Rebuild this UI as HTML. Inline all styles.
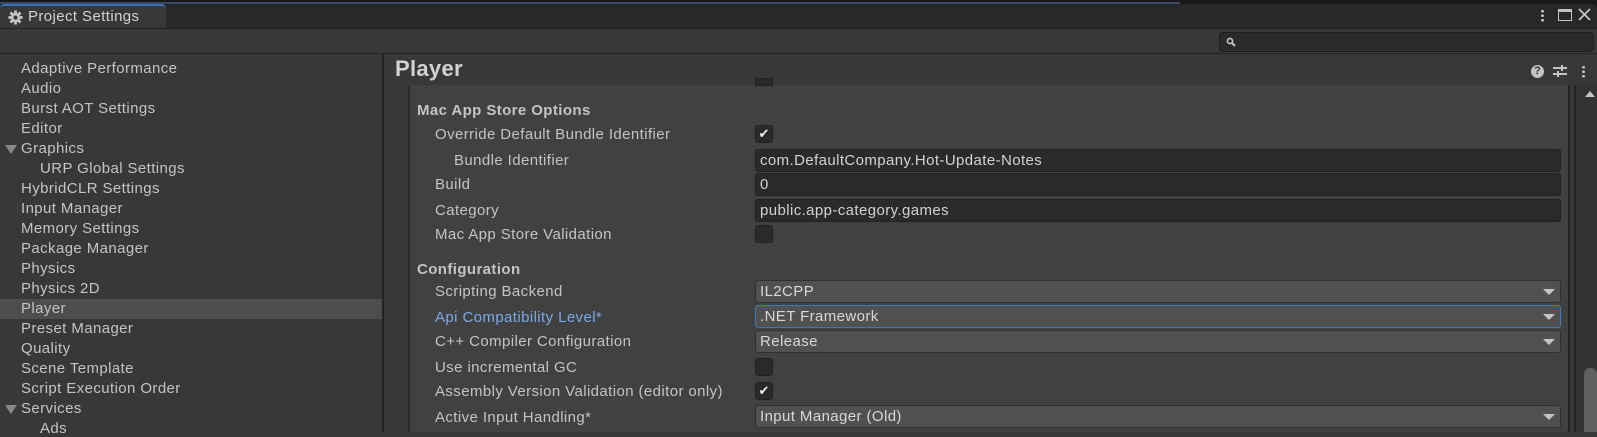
<!DOCTYPE html>
<html><head><meta charset="utf-8"><style>
*{box-sizing:border-box;margin:0;padding:0}
body{width:1597px;height:432px;overflow:hidden;background:#383838;font-family:"Liberation Sans",sans-serif;font-size:15px;letter-spacing:0.4px;color:#c4c4c4;position:relative}
.abs{position:absolute}
.li{position:absolute;left:21px;white-space:nowrap}
.lb{position:absolute;left:435px;white-space:nowrap}
.fld{position:absolute;left:755px;width:806px;height:23px;border-radius:3px;padding:2px 4px;white-space:nowrap}
.tf{background:#2a2a2a;border:1px solid #212121;color:#d2d2d2}
.dd{background:#515151;border:1px solid #303030;color:#d8d8d8}
.dd:after{content:"";position:absolute;right:5px;top:8px;border-left:6px solid transparent;border-right:6px solid transparent;border-top:6px solid #c4c4c4}
.cb{position:absolute;left:755px;width:18px;height:18px;background:#2a2a2a;border:1px solid #212121;border-radius:3px;color:#eee;font-size:13px;line-height:16px;text-align:center;letter-spacing:0}
.tri{position:absolute;left:5px;border-left:6px solid transparent;border-right:6px solid transparent;border-top:9px solid #888}
</style></head><body>
<div class="abs" style="left:0;top:0;width:1597px;height:28px;background:#191919"></div>
<div class="abs" style="left:0;top:2px;width:1180px;height:2px;background:#3a4a66"></div>
<div class="abs" style="left:0;top:4px;width:166px;height:25px;background:#383838;border-top:2px solid #3f6fb5;border-radius:4px 4px 0 0"></div>
<div class="abs" style="left:166px;top:4px;width:1431px;height:24px;background:#282828;border-radius:0 6px 0 0"></div>
<svg class="abs" style="left:8px;top:10px" width="15" height="15" viewBox="0 0 16 16"><g fill="#c4c4c4"><circle cx="8" cy="8" r="5"/><rect x="6.5" y="0.5" width="3" height="15"/><rect x="0.5" y="6.5" width="15" height="3"/><rect x="6.5" y="0.5" width="3" height="15" transform="rotate(45 8 8)"/><rect x="6.5" y="0.5" width="3" height="15" transform="rotate(-45 8 8)"/></g><circle cx="8" cy="8" r="2.2" fill="#383838"/></svg>
<div class="abs" style="left:28px;top:8px;color:#d2d2d2">Project Settings</div>
<div class="abs" style="left:1541px;top:9px;width:3px;height:13px;background:radial-gradient(circle,#c4c4c4 1.3px,transparent 1.5px) 0 0/3px 4.5px"></div>
<div class="abs" style="left:1558px;top:9px;width:14px;height:12px;border:1.5px solid #c4c4c4;border-top-width:3px"></div>
<svg class="abs" style="left:1578px;top:8px" width="13" height="13" viewBox="0 0 13 13"><path d="M1 1L12 12M12 1L1 12" stroke="#c4c4c4" stroke-width="1.8"/></svg>
<div class="abs" style="left:0;top:28px;width:1597px;height:26px;background:#383838;border-top:1px solid #232323;border-bottom:1px solid #232323"></div>
<div class="abs" style="left:1219px;top:32px;width:375px;height:20px;background:#2a2a2a;border:1px solid #1f1f1f;border-radius:4px"></div>
<svg class="abs" style="left:1226px;top:37px" width="10" height="10" viewBox="0 0 10 10"><circle cx="4" cy="4" r="2.6" fill="none" stroke="#c4c4c4" stroke-width="1.6"/><path d="M6 6L9 9" stroke="#c4c4c4" stroke-width="2"/></svg>
<div class="abs" style="left:382px;top:54px;width:2px;height:378px;background:#232323"></div>
<div class="li" style="top:60px">Adaptive Performance</div>
<div class="li" style="top:80px">Audio</div>
<div class="li" style="top:100px">Burst AOT Settings</div>
<div class="li" style="top:120px">Editor</div>
<div class="tri" style="top:145px"></div><div class="li" style="top:140px">Graphics</div>
<div class="li" style="top:160px;left:40px">URP Global Settings</div>
<div class="li" style="top:180px">HybridCLR Settings</div>
<div class="li" style="top:200px">Input Manager</div>
<div class="li" style="top:220px">Memory Settings</div>
<div class="li" style="top:240px">Package Manager</div>
<div class="li" style="top:260px">Physics</div>
<div class="li" style="top:280px">Physics 2D</div>
<div class="abs" style="left:0;top:299px;width:382px;height:20px;background:#4d4d4d"></div>
<div class="li" style="top:300px">Player</div>
<div class="li" style="top:320px">Preset Manager</div>
<div class="li" style="top:340px">Quality</div>
<div class="li" style="top:360px">Scene Template</div>
<div class="li" style="top:380px">Script Execution Order</div>
<div class="tri" style="top:405px"></div><div class="li" style="top:400px">Services</div>
<div class="li" style="top:420px;left:40px">Ads</div>
<div class="abs" style="left:384px;top:54px;width:1213px;height:31px;background:#383838"></div>
<div class="abs" style="left:395px;top:56px;font-size:22px;font-weight:bold;color:#d2d2d2;letter-spacing:0.3px">Player</div>
<div class="abs" style="left:1531px;top:65px;width:13px;height:13px;border-radius:50%;background:#c4c4c4;color:#383838;font-size:11px;font-weight:bold;text-align:center;line-height:13px;letter-spacing:0">?</div>
<svg class="abs" style="left:1553px;top:64px" width="14" height="14" viewBox="0 0 14 14"><path d="M0 4H14M0 10H14M9 1V7M5 7V13" stroke="#c4c4c4" stroke-width="2"/></svg>
<div class="abs" style="left:1582px;top:65px;width:3px;height:13px;background:radial-gradient(circle,#c4c4c4 1.3px,transparent 1.5px) 0 0/3px 4.5px"></div>
<div class="abs" style="left:384px;top:85px;width:24px;height:347px;background:#383838"></div>
<div class="abs" style="left:408px;top:85px;width:2px;height:347px;background:#2a2a2a"></div>
<div class="abs" style="left:410px;top:85px;width:1158px;height:347px;background:#414141"></div>
<div class="abs" style="left:1568px;top:85px;width:2px;height:347px;background:#232323"></div>
<div class="abs" style="left:1574px;top:85px;width:2px;height:347px;background:#232323"></div>
<div class="abs" style="left:1576px;top:85px;width:21px;height:347px;background:#323232"></div>
<div class="abs" style="left:1585px;top:91px;border-left:5px solid transparent;border-right:5px solid transparent;border-bottom:6px solid #c4c4c4"></div>
<div class="abs" style="left:1584px;top:368px;width:13px;height:64px;background:#5f5f5f;border-radius:6px 6px 0 0"></div>
<div class="abs" style="left:755px;top:78px;width:18px;height:8px;background:#2a2a2a;border:1px solid #212121"></div>
<div class="abs" style="left:417px;top:102px;font-weight:bold">Mac App Store Options</div>
<div class="lb" style="top:126px">Override Default Bundle Identifier</div><div class="cb" style="top:125px">✔</div>
<div class="lb" style="top:152px;left:454px">Bundle Identifier</div><div class="fld tf" style="top:149px">com.DefaultCompany.Hot-Update-Notes</div>
<div class="lb" style="top:176px">Build</div><div class="fld tf" style="top:173px">0</div>
<div class="lb" style="top:202px">Category</div><div class="fld tf" style="top:199px">public.app-category.games</div>
<div class="lb" style="top:226px">Mac App Store Validation</div><div class="cb" style="top:225px"></div>
<div class="abs" style="left:417px;top:261px;font-weight:bold">Configuration</div>
<div class="lb" style="top:283px">Scripting Backend</div><div class="fld dd" style="top:280px">IL2CPP</div>
<div class="lb" style="top:309px;color:#7ba9e8">Api Compatibility Level*</div><div class="fld dd" style="top:305px;border-color:#3a79bb">.NET Framework</div>
<div class="lb" style="top:333px">C++ Compiler Configuration</div><div class="fld dd" style="top:330px">Release</div>
<div class="lb" style="top:359px">Use incremental GC</div><div class="cb" style="top:358px"></div>
<div class="lb" style="top:383px">Assembly Version Validation (editor only)</div><div class="cb" style="top:382px">✔</div>
<div class="lb" style="top:409px">Active Input Handling*</div><div class="fld dd" style="top:405px">Input Manager (Old)</div>
</body></html>
